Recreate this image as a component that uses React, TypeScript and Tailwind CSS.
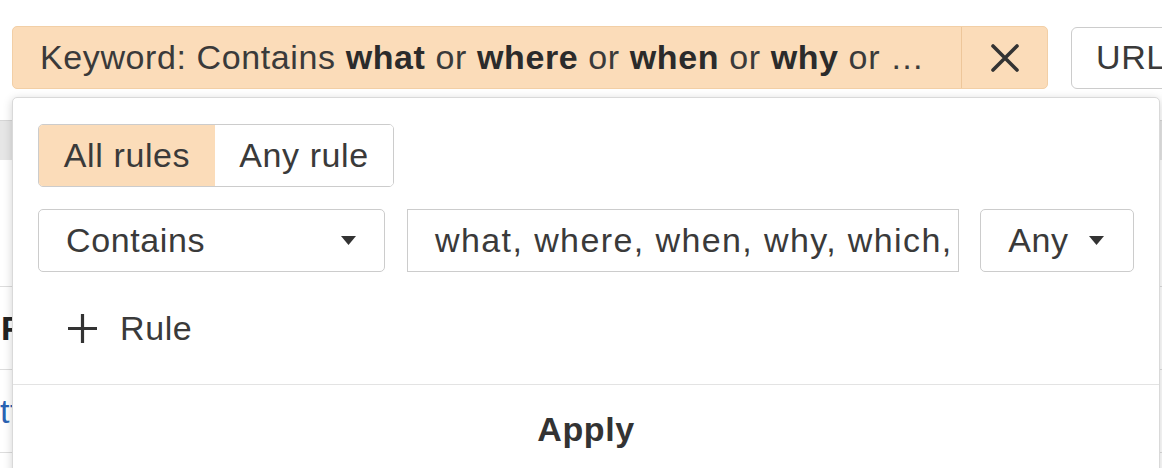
import React from "react";

function Caret() {
  return (
    <svg width="15" height="9" viewBox="0 0 15 9" className="shrink-0">
      <path d="M0 0 L15 0 L7.5 9 Z" fill="#333" />
    </svg>
  );
}

export default function App() {
  return (
    <div className="relative w-[1162px] h-[468px] overflow-hidden bg-white font-['Liberation_Sans',Arial,sans-serif] text-[#3a3a3a] tracking-[0.6px]">
      {/* top bar */}
      <div className="flex items-center pt-[26px] pl-[12px]">
        <div className="flex h-[63px] w-[1036px] shrink-0 rounded-[5px] border border-[#f2cfa6] bg-[#fbdcb9]">
          <div className="flex flex-1 items-center overflow-hidden whitespace-nowrap pl-[27px] text-[34px]">
            <span>
              Keyword: Contains <b className="font-bold text-[#2b2b2b]">what</b> or{" "}
              <b className="font-bold text-[#2b2b2b]">where</b> or{" "}
              <b className="font-bold text-[#2b2b2b]">when</b> or{" "}
              <b className="font-bold text-[#2b2b2b]">why</b> or …
            </span>
          </div>
          <div className="flex w-[86px] items-center justify-center border-l border-[#edc69a]">
            <svg width="28" height="28" viewBox="0 0 28 28">
              <path d="M2 2 L26 26 M26 2 L2 26" stroke="#333" strokeWidth="3.6" strokeLinecap="round" />
            </svg>
          </div>
        </div>
        <div className="ml-[23px] flex h-[62px] shrink-0 items-center rounded-[6px] border border-[#cccccc] bg-white pl-[24px] pr-[24px] text-[34px]">
          URL
        </div>
      </div>

      {/* background table (mostly hidden) */}
      <div className="mt-[31px] w-full text-[34px]">
        <div className="h-[40px] border-t border-[#d6d6d6] bg-[#e6e6e6]" />
        <div className="h-[127px] border-b border-[#dddddd]" />
        <div className="flex h-[83px] items-center border-b border-[#dddddd] pl-[1px] font-bold text-[#222]">
          <span>F</span>
        </div>
        <div className="flex h-[83px] items-center border-b border-[#dddddd] text-[#2a63b4]">
          <span>tt</span>
        </div>
      </div>

      {/* popover */}
      <div className="absolute left-[12px] top-[97px] flex h-[400px] w-[1148px] flex-col rounded-[5px] border border-[#d9d9d9] bg-white shadow-[0_2px_10px_rgba(0,0,0,0.18)]">
        <div className="flex flex-col px-[25px] pt-[26px]">
          <div className="flex h-[63px] w-[356px] overflow-hidden rounded-[5px] border border-[#cccccc] text-[34px]">
            <div className="flex w-[176px] items-center justify-center bg-[#fbdcb9]">All rules</div>
            <div className="flex flex-1 items-center justify-center bg-white">Any rule</div>
          </div>
          <div className="mt-[22px] flex h-[63px] items-stretch text-[34px]">
            <div className="flex w-[348px] items-center justify-between rounded-[5px] border border-[#cccccc] pl-[27px] pr-[28px]">
              <span>Contains</span>
              <Caret />
            </div>
            <div className="ml-[22px] flex w-[554px] items-center overflow-hidden whitespace-nowrap border border-[#cccccc] pl-[27px] tracking-[1.4px]">
              what, where, when, why, which,
            </div>
            <div className="ml-[21px] flex w-[154px] items-center justify-between rounded-[5px] border border-[#cccccc] pl-[27px] pr-[29px]">
              <span>Any</span>
              <Caret />
            </div>
          </div>
          <div className="flex h-[112px] items-center pl-[29px] text-[34px]">
            <svg width="31" height="31" viewBox="0 0 31 31" className="shrink-0">
              <path d="M15.5 1 V30 M1 15.5 H30" stroke="#333" strokeWidth="3.2" />
            </svg>
            <span className="ml-[22px]">Rule</span>
          </div>
        </div>
        <div className="flex h-[90px] items-center justify-center border-t border-[#e3e3e3] text-[34px] font-bold text-[#333]">
          Apply
        </div>
      </div>
    </div>
  );
}
